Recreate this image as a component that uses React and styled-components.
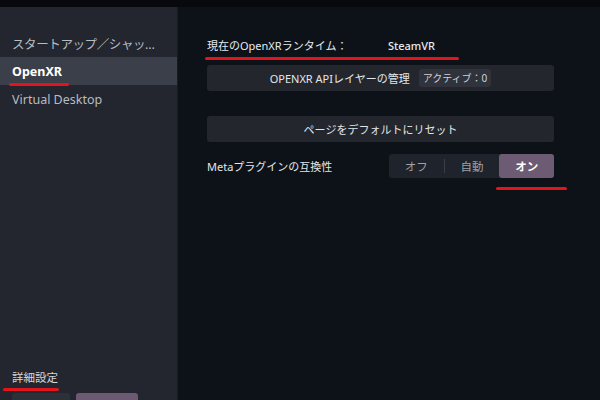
import React from "react";
import styled, { createGlobalStyle } from "styled-components";

const Global = createGlobalStyle`
  html, body { margin: 0; padding: 0; background: #0d1219; }
  body { font-family: "Noto Sans", "Noto Sans CJK JP", sans-serif; }
  #root { width: 600px; height: 400px; overflow: hidden; }
`;

const Frame = styled.div`
  position: relative;
  width: 600px;
  height: 400px;
  display: flex;
  flex-direction: column;
  background: #0d1219;
  overflow: hidden;
`;

const TopBar = styled.div`
  height: 7px;
  flex: none;
  background: #07090c;
`;

const Body = styled.div`
  flex: 1;
  display: flex;
  min-height: 0;
`;

const Sidebar = styled.nav`
  width: 178px;
  flex: none;
  background: #23262e;
  border-right: 1px solid #181b21;
  display: flex;
  flex-direction: column;
  padding-top: 22px;
  box-sizing: border-box;
`;

const NavItem = styled.div`
  height: 28px;
  display: flex;
  align-items: center;
  padding-left: 12px;
  font-size: 12.5px;
  letter-spacing: ${(p) => (p.$tight ? "-0.4px" : "0")};
  color: ${(p) => (p.$active ? "#ffffff" : "#b7bbc3")};
  font-weight: ${(p) => (p.$active ? 700 : 400)};
  background: ${(p) => (p.$active ? "#3b3f49" : "transparent")};
  white-space: nowrap;
  overflow: hidden;
`;

const SideFooter = styled.div`
  margin-top: auto;
  display: flex;
  flex-direction: column;
  gap: 7px;
  padding-left: 12px;
`;

const FooterLabel = styled.div`
  font-size: 11.5px;
  color: #d4d7dc;
  height: 16px;
  line-height: 16px;
`;

const FooterButtons = styled.div`
  display: flex;
  gap: 6px;
  height: 7px;
  align-items: flex-start;
`;

const FooterBtn = styled.div`
  width: ${(p) => p.$w}px;
  height: 12px;
  border-radius: 3px;
  background: ${(p) => (p.$primary ? "#6b5a72" : "#2c3039")};
`;

const Main = styled.main`
  flex: 1;
  padding: 28px 46px 0 29px;
  display: flex;
  flex-direction: column;
`;

const RuntimeRow = styled.div`
  height: 20px;
  display: flex;
  align-items: center;
  font-size: 11px;
  color: #e6e9ee;
`;

const RuntimeLabel = styled.span`
  width: 181px;
`;

const RuntimeValue = styled.span`
  font-weight: 500;
`;

const WideButton = styled.div`
  height: 26px;
  margin-top: ${(p) => p.$mt}px;
  border-radius: 3px;
  background: #23262d;
  display: flex;
  align-items: center;
  justify-content: center;
  gap: 9px;
  font-size: 11px;
  color: #e3e6ea;
`;

const Badge = styled.span`
  background: #30333b;
  border-radius: 3px;
  padding: 0 4px;
  height: 18px;
  line-height: 18px;
  font-size: 10px;
  color: #cfd2d7;
`;

const SettingRow = styled.div`
  margin-top: 12px;
  height: 24px;
  display: flex;
  align-items: center;
  justify-content: space-between;
`;

const SettingLabel = styled.span`
  font-size: 11px;
  color: #e3e6ea;
`;

const Segmented = styled.div`
  width: 165px;
  height: 24px;
  display: flex;
  align-items: center;
  background: #1f232b;
  border-radius: 3px;
`;

const Segment = styled.div`
  flex: 1;
  height: 100%;
  display: flex;
  align-items: center;
  justify-content: center;
  font-size: 11.5px;
  border-radius: 3px;
  color: ${(p) => (p.$on ? "#ffffff" : "#9da1aa")};
  font-weight: ${(p) => (p.$on ? 700 : 400)};
  background: ${(p) => (p.$on ? "#6d5a73" : "transparent")};
`;

const Divider = styled.div`
  width: 1px;
  height: 14px;
  background: #3a3e47;
`;

const Mark = styled.div`
  position: absolute;
  height: 3px;
  border-radius: 2px;
  background: #e3141b;
  left: ${(p) => p.$x}px;
  top: ${(p) => p.$y}px;
  width: ${(p) => p.$w}px;
`;

export default function App() {
  return (
    <>
      <Global />
      <Frame>
        <TopBar />
        <Body>
          <Sidebar>
            <NavItem $tight>スタートアップ／シャッ…</NavItem>
            <NavItem $active>OpenXR</NavItem>
            <NavItem>Virtual Desktop</NavItem>
            <SideFooter>
              <FooterLabel>詳細設定</FooterLabel>
              <FooterButtons>
                <FooterBtn $w={58} />
                <FooterBtn $w={62} $primary />
              </FooterButtons>
            </SideFooter>
          </Sidebar>
          <Main>
            <RuntimeRow>
              <RuntimeLabel>現在のOpenXRランタイム：</RuntimeLabel>
              <RuntimeValue>SteamVR</RuntimeValue>
            </RuntimeRow>
            <WideButton $mt={10}>
              <span>OPENXR APIレイヤーの管理</span>
              <Badge>アクティブ：0</Badge>
            </WideButton>
            <WideButton $mt={25}>ページをデフォルトにリセット</WideButton>
            <SettingRow>
              <SettingLabel>Metaプラグインの互換性</SettingLabel>
              <Segmented>
                <Segment>オフ</Segment>
                <Divider />
                <Segment>自動</Segment>
                <Segment $on>オン</Segment>
              </Segmented>
            </SettingRow>
          </Main>
        </Body>
        <Mark $x={9} $y={83} $w={60} />
        <Mark $x={205} $y={57} $w={254} />
        <Mark $x={496} $y={187} $w={71} />
        <Mark $x={3} $y={388} $w={56} />
      </Frame>
    </>
  );
}
